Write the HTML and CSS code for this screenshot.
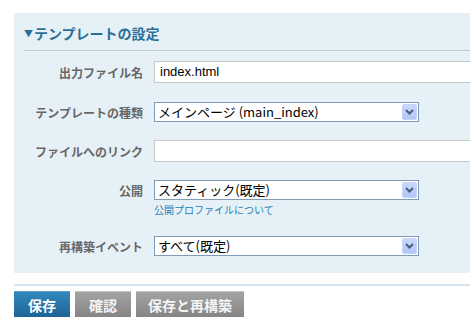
FILE: index.html
```html
<!DOCTYPE html>
<html lang="ja">
<head>
<meta charset="utf-8">
<link rel="stylesheet" href="styles.css">
</head>
<body>
<div class="panel">
  <div class="title"><span class="tri">▼</span>テンプレートの設定</div>
  <div class="row r1">
    <label class="label">出力ファイル名</label>
    <div class="field"><div class="input">index.html</div></div>
  </div>
  <div class="row r2">
    <label class="label">テンプレートの種類</label>
    <div class="field">
      <div class="select"><span class="val">メインページ (main_index)</span><span class="arrow"><svg width="9" height="6" viewBox="0 0 9 6"><path d="M1 1 L4.5 4.5 L8 1" fill="none" stroke="#4a5d80" stroke-width="2"/></svg></span></div>
    </div>
  </div>
  <div class="row r3">
    <label class="label">ファイルへのリンク</label>
    <div class="field"><div class="input"></div></div>
  </div>
  <div class="row r4">
    <label class="label">公開</label>
    <div class="field">
      <div class="select"><span class="val">スタティック(既定)</span><span class="arrow"><svg width="9" height="6" viewBox="0 0 9 6"><path d="M1 1 L4.5 4.5 L8 1" fill="none" stroke="#4a5d80" stroke-width="2"/></svg></span></div>
    </div>
  </div>
  <div class="hint-row"><a class="hint" href="#">公開プロファイルについて</a></div>
  <div class="row r5">
    <label class="label">再構築イベント</label>
    <div class="field">
      <div class="select"><span class="val">すべて(既定)</span><span class="arrow"><svg width="9" height="6" viewBox="0 0 9 6"><path d="M1 1 L4.5 4.5 L8 1" fill="none" stroke="#4a5d80" stroke-width="2"/></svg></span></div>
    </div>
  </div>
</div>
<div class="actions">
  <button class="btn primary">保存</button>
  <button class="btn">確認</button>
  <button class="btn">保存と再構築</button>
</div>
</body>
</html>
```
FILE: styles.css
```css
html, body {
  margin: 0;
  padding: 0;
  background: #fff;
  overflow: hidden;
}
body {
  font-family: "Noto Sans CJK JP", "Liberation Sans", sans-serif;
  width: 470px;
  height: 329px;
}
.panel {
  margin: 13px 0 0 14px;
  background: #e6f1f7;
  padding: 10px 0 17px 10px;
  overflow: hidden;
}
.title {
  height: 27px;
  line-height: 20px;
  font-size: 14px;
  font-weight: bold;
  color: #2b6f99;
  border-bottom: 1px solid #c6cacc;
  white-space: nowrap;
}
.tri {
  font-size: 9px;
  margin-right: 1px;
  vertical-align: 2px;
}
.row {
  display: grid;
  grid-template-columns: 119px 1fr;
  column-gap: 11px;
  align-items: center;
}
.r1 { margin-top: 10px; }
.r2 { margin-top: 19px; }
.r3 { margin-top: 18px; }
.r4 { margin-top: 18px; }
.r5 { margin-top: 22px; }
.label {
  text-align: right;
  font-size: 12px;
  font-weight: bold;
  color: #666;
  white-space: nowrap;
}
.field {
  min-width: 0;
  overflow: hidden;
}
.input {
  box-sizing: border-box;
  width: 340px;
  height: 22px;
  background: #fff;
  border: 1px solid #c9c9c9;
  font-size: 13px;
  line-height: 20px;
  padding-left: 5px;
  color: #000;
  font-family: "Liberation Sans", "Noto Sans CJK JP", sans-serif;
}
.select {
  box-sizing: border-box;
  width: 265px;
  height: 20px;
  background: #fff;
  border: 1px solid #7f9db9;
  display: flex;
  align-items: center;
  justify-content: space-between;
  padding: 1px 1px 1px 3px;
}
.val {
  font-size: 13px;
  line-height: 16px;
  color: #000;
  white-space: nowrap;
}
.arrow {
  box-sizing: border-box;
  width: 15px;
  height: 16px;
  background: linear-gradient(#c9d8fb, #b2c6f6);
  border: 1px solid #c4d3f7;
  border-radius: 2px;
  display: flex;
  align-items: center;
  justify-content: center;
}
.hint-row {
  padding-left: 130px;
  line-height: 13px;
  height: 13px;
  margin-top: 1px;
}
.hint {
  font-size: 10px;
  color: #2a7db3;
  text-decoration: none;
  white-space: nowrap;
}
.actions {
  margin: 11px 0 0 14px;
  border-top: 2px solid #d1e4ef;
  padding-top: 5px;
  display: flex;
  gap: 5px;
}
.btn {
  height: 26px;
  border: 0;
  padding: 0 12px;
  font-family: "Noto Sans CJK JP", sans-serif;
  font-size: 14px;
  font-weight: bold;
  color: #f4f4f4;
  background: linear-gradient(#a3a3a3, #858585);
  border-top: 1px solid #c4c4c4;
  min-width: 56px;
  line-height: 24px;
}
.btn.primary {
  color: #fff;
  background: linear-gradient(#3289bd, #1e6394);
  border-top-color: #5aa2cc;
}
```
